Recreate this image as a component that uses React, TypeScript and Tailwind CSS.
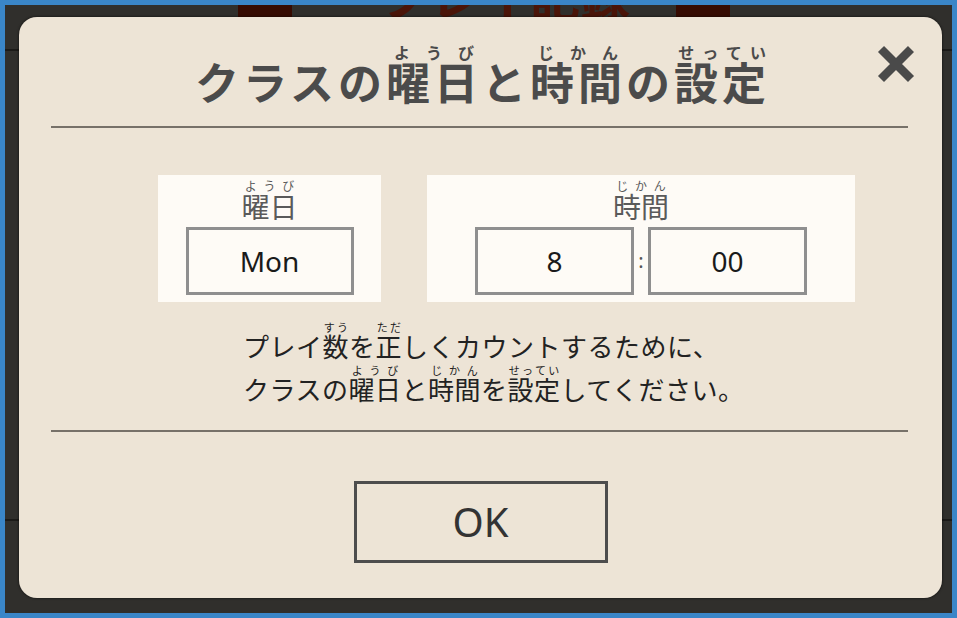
import React from 'react'

const jp = { fontFamily: '"Noto Sans CJK JP", "Noto Sans", sans-serif' }
const latin = { fontFamily: '"Noto Sans", "Noto Sans CJK JP", sans-serif' }

function R({ b, r, rt }: { b: string; r: string; rt: string }) {
  return (
    <ruby>
      {b}
      <rt className={rt}>{r}</rt>
    </ruby>
  )
}

function CloseIcon() {
  return (
    <svg width="40" height="40" viewBox="0 0 40 40">
      <path d="M5 5 L35 35 M35 5 L5 35" stroke="#4a4a4a" strokeWidth="8.5" strokeLinecap="butt" fill="none" />
    </svg>
  )
}

export default function App() {
  const titleRt = 'text-[16px] font-bold tracking-[0px] leading-[20px] text-[#4b4b4b]'
  const msgRt = 'text-[11px] leading-[12px] tracking-[0px]'

  return (
    <div className="relative w-[957px] h-[618px] border-[5px] border-[#3a86c8] bg-[#302f2c] overflow-hidden" style={jp}>
      {/* the page behind the dialog */}
      <div className="absolute left-[233px] top-0 w-[54px] h-[12px] bg-[#360b02]" />
      <div className="absolute left-[671px] top-0 w-[54px] h-[12px] bg-[#360b02]" />
      <div className="absolute left-[375px] top-[-36px] text-[50px] font-bold text-[#4a1408] leading-none">プレイ記録</div>
      <div className="absolute left-0 top-[44px] w-[20px] h-[2px] bg-[#1b1a18]" />
      <div className="absolute left-0 top-[514px] w-[20px] h-[2px] bg-[#1b1a18]" />
      <div className="absolute right-0 top-[44px] w-[20px] h-[2px] bg-[#1b1a18]" />
      <div className="absolute right-0 top-[514px] w-[20px] h-[2px] bg-[#1b1a18]" />

      {/* dialog */}
      <div className="absolute left-[14px] top-[12px] w-[923px] h-[581px] rounded-[18px] bg-[#ede4d6] shadow-[0_0_2px_1px_rgba(0,0,0,0.35)] flex flex-col">
        <div className="relative h-[109px] flex items-end justify-center pb-[20px] pl-[4px]">
          <h1 className="text-[44px] font-bold leading-[50px] tracking-[4px] text-[#4b4b4b]">
            クラスの<R b="曜日" r="ようび" rt={titleRt} />と<R b="時間" r="じかん" rt={titleRt} />の<R b="設定" r="せってい" rt={titleRt} />
          </h1>
          <button className="absolute right-[26px] top-[27px]">
            <CloseIcon />
          </button>
        </div>
        <div className="ml-[32px] mr-[34px] h-[2px] bg-[#777169]" />

        <div className="flex ml-[139px] mt-[47px] gap-[46px]">
          <div className="w-[223px] h-[127px] bg-[#fefbf6] flex flex-col items-center">
            <div className="h-[52px] flex items-end pb-[6px] text-[28px] leading-[30px] text-[#5a5a5a]">
              <R b="曜日" r="ようび" rt="text-[12px] leading-[12px]" />
            </div>
            <div className="w-[168px] h-[68px] border-[3px] border-[#8f8f8f] flex items-center justify-center text-[28px] text-[#1a1a1a]" style={latin}>
              Mon
            </div>
          </div>
          <div className="w-[428px] h-[127px] bg-[#fefbf6] flex flex-col items-center">
            <div className="h-[52px] flex items-end pb-[6px] text-[28px] leading-[30px] text-[#5a5a5a]">
              <R b="時間" r="じかん" rt="text-[12px] leading-[12px]" />
            </div>
            <div className="flex items-center gap-[4px]" style={latin}>
              <div className="w-[159px] h-[68px] border-[3px] border-[#8f8f8f] flex items-center justify-center text-[28px] text-[#1a1a1a]">8</div>
              <span className="text-[20px] text-[#555] w-[6px] text-center">:</span>
              <div className="w-[159px] h-[68px] border-[3px] border-[#8f8f8f] flex items-center justify-center text-[28px] text-[#1a1a1a]">00</div>
            </div>
          </div>
        </div>

        <div className="ml-[224px] mt-[20px] text-[26px] leading-[39px] tracking-[0.5px] text-[#222]">
          <p>
            プレイ<R b="数" r="すう" rt={msgRt} />を<R b="正" r="ただ" rt={msgRt} />しくカウントするために、
          </p>
          <p>
            クラスの<R b="曜日" r="ようび" rt={msgRt} />と<R b="時間" r="じかん" rt={msgRt} />を<R b="設定" r="せってい" rt={msgRt} />してください。
          </p>
        </div>

        <div className="ml-[32px] mr-[34px] mt-[22px] h-[2px] bg-[#777169]" />

        <div className="flex justify-center mt-[49px]">
          <button className="w-[254px] h-[82px] border-[3px] border-[#4d4d4d] text-[40px] text-[#333] flex items-center justify-center" style={latin}>
            OK
          </button>
        </div>
      </div>
    </div>
  )
}
